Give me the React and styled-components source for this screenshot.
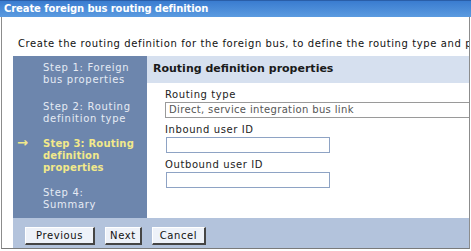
import React from 'react';
import styled, { createGlobalStyle } from 'styled-components';

const GlobalStyle = createGlobalStyle`
body {
  margin: 0;
  background: white;
  font-family: "DejaVu Sans", Verdana, sans-serif;
  font-size: 10px;
}
`;

const Window = styled.div`
width: 471px;
height: 251px;
background: white;
overflow: hidden;
`;

const TitleBar = styled.div`
height: 17px;
box-sizing: border-box;
border-top: 1px solid #2a5ea8;
background: linear-gradient(#3a7cd0, #5b9be0);
color: white;
font-family: Tahoma, "DejaVu Sans", sans-serif;
font-weight: bold;
font-size: 10px;
line-height: 15px;
padding-left: 4px;
white-space: nowrap;
letter-spacing: -0.1px;
`;

const Frame = styled.div`
margin-left: 1px;
width: 469px;
height: 232px;
box-sizing: border-box;
border-left: 1px solid #8c8c8c;
border-right: 1px solid #8c8c8c;
border-bottom: 1px solid #7a7a7a;
overflow: hidden;
`;

const Intro = styled.div`
padding: 21px 0 0 16px;
height: 39px;
box-sizing: border-box;
color: #111;
white-space: nowrap;
overflow: hidden;
letter-spacing: 0.6px;
`;

const Wizard = styled.div`
margin-left: 11px;
display: grid;
grid-template-columns: 134px 1fr;
grid-template-rows: 162px 30px;
`;

const Nav = styled.div`
background: #6d86ad;
padding-top: 6px;
`;

const Step = styled.div`
position: relative;
padding: 0 2px 0 30px;
margin-bottom: ${p => p.gap}px;
line-height: 12px;
color: ${p => (p.current ? '#f2e98a' : '#e6ebf4')};
font-weight: ${p => (p.current ? 'bold' : 'normal')};
letter-spacing: ${p => (p.current ? '0.2px' : '0.7px')};
white-space: nowrap;
`;

const Arrow = styled.span`
position: absolute;
left: 4px;
top: -1px;
font-size: 13px;
font-weight: bold;
color: #f2e98a;
`;

const Content = styled.div`
background: white;
overflow: hidden;
`;

const Header = styled.div`
background: #d6e0ef;
height: 27px;
line-height: 25px;
padding-left: 6px;
font-weight: bold;
font-size: 11px;
color: #1a1a1a;
`;

const Fields = styled.div`
padding: 6px 0 0 18px;
display: flex;
flex-direction: column;
`;

const Label = styled.div`
color: #222;
line-height: 12px;
letter-spacing: 0.6px;
`;

const ReadOnly = styled.div`
margin: 1px 0 6px 0;
width: 320px;
height: 16px;
box-sizing: border-box;
border: 1px solid #9a9a9a;
padding-left: 3px;
line-height: 14px;
color: #555;
white-space: nowrap;
letter-spacing: 0.35px;
`;

const Input = styled.div`
margin: 1px 0 6px 1px;
width: 164px;
height: 16px;
box-sizing: border-box;
border: 1px solid #8ea3c4;
background: white;
`;

const Footer = styled.div`
grid-column: 1 / 3;
background: #b3c3dc;
display: flex;
align-items: flex-start;
gap: 10px;
padding: 9px 0 0 12px;
`;

const Button = styled.div`
height: 18px;
box-sizing: border-box;
padding: 0 ${p => p.pad}px;
background: #eef2f9;
border-top: 1px solid #ffffff;
border-left: 1px solid #ffffff;
border-right: 2px solid #454545;
border-bottom: 2px solid #454545;
line-height: 15px;
font-size: 10px;
color: #111;
letter-spacing: 0.6px;
`;

export default function App() {
  return (
    <Window>
      <GlobalStyle />
      <TitleBar>Create foreign bus routing definition</TitleBar>
      <Frame>
        <Intro>Create the routing definition for the foreign bus, to define the routing type and parameters.</Intro>
        <Wizard>
          <Nav>
            <Step gap={15}>Step 1: Foreign<br />bus properties</Step>
            <Step gap={13}>Step 2: Routing<br />definition type</Step>
            <Step gap={13} current>
              <Arrow>→</Arrow>
              Step 3: Routing<br />definition<br />properties
            </Step>
            <Step gap={0}>Step 4:<br />Summary</Step>
          </Nav>
          <Content>
            <Header>Routing definition properties</Header>
            <Fields>
              <Label>Routing type</Label>
              <ReadOnly>Direct, service integration bus link</ReadOnly>
              <Label>Inbound user ID</Label>
              <Input />
              <Label>Outbound user ID</Label>
              <Input />
            </Fields>
          </Content>
          <Footer>
            <Button pad={10}>Previous</Button>
            <Button pad={4}>Next</Button>
            <Button pad={7}>Cancel</Button>
          </Footer>
        </Wizard>
      </Frame>
    </Window>
  );
}
